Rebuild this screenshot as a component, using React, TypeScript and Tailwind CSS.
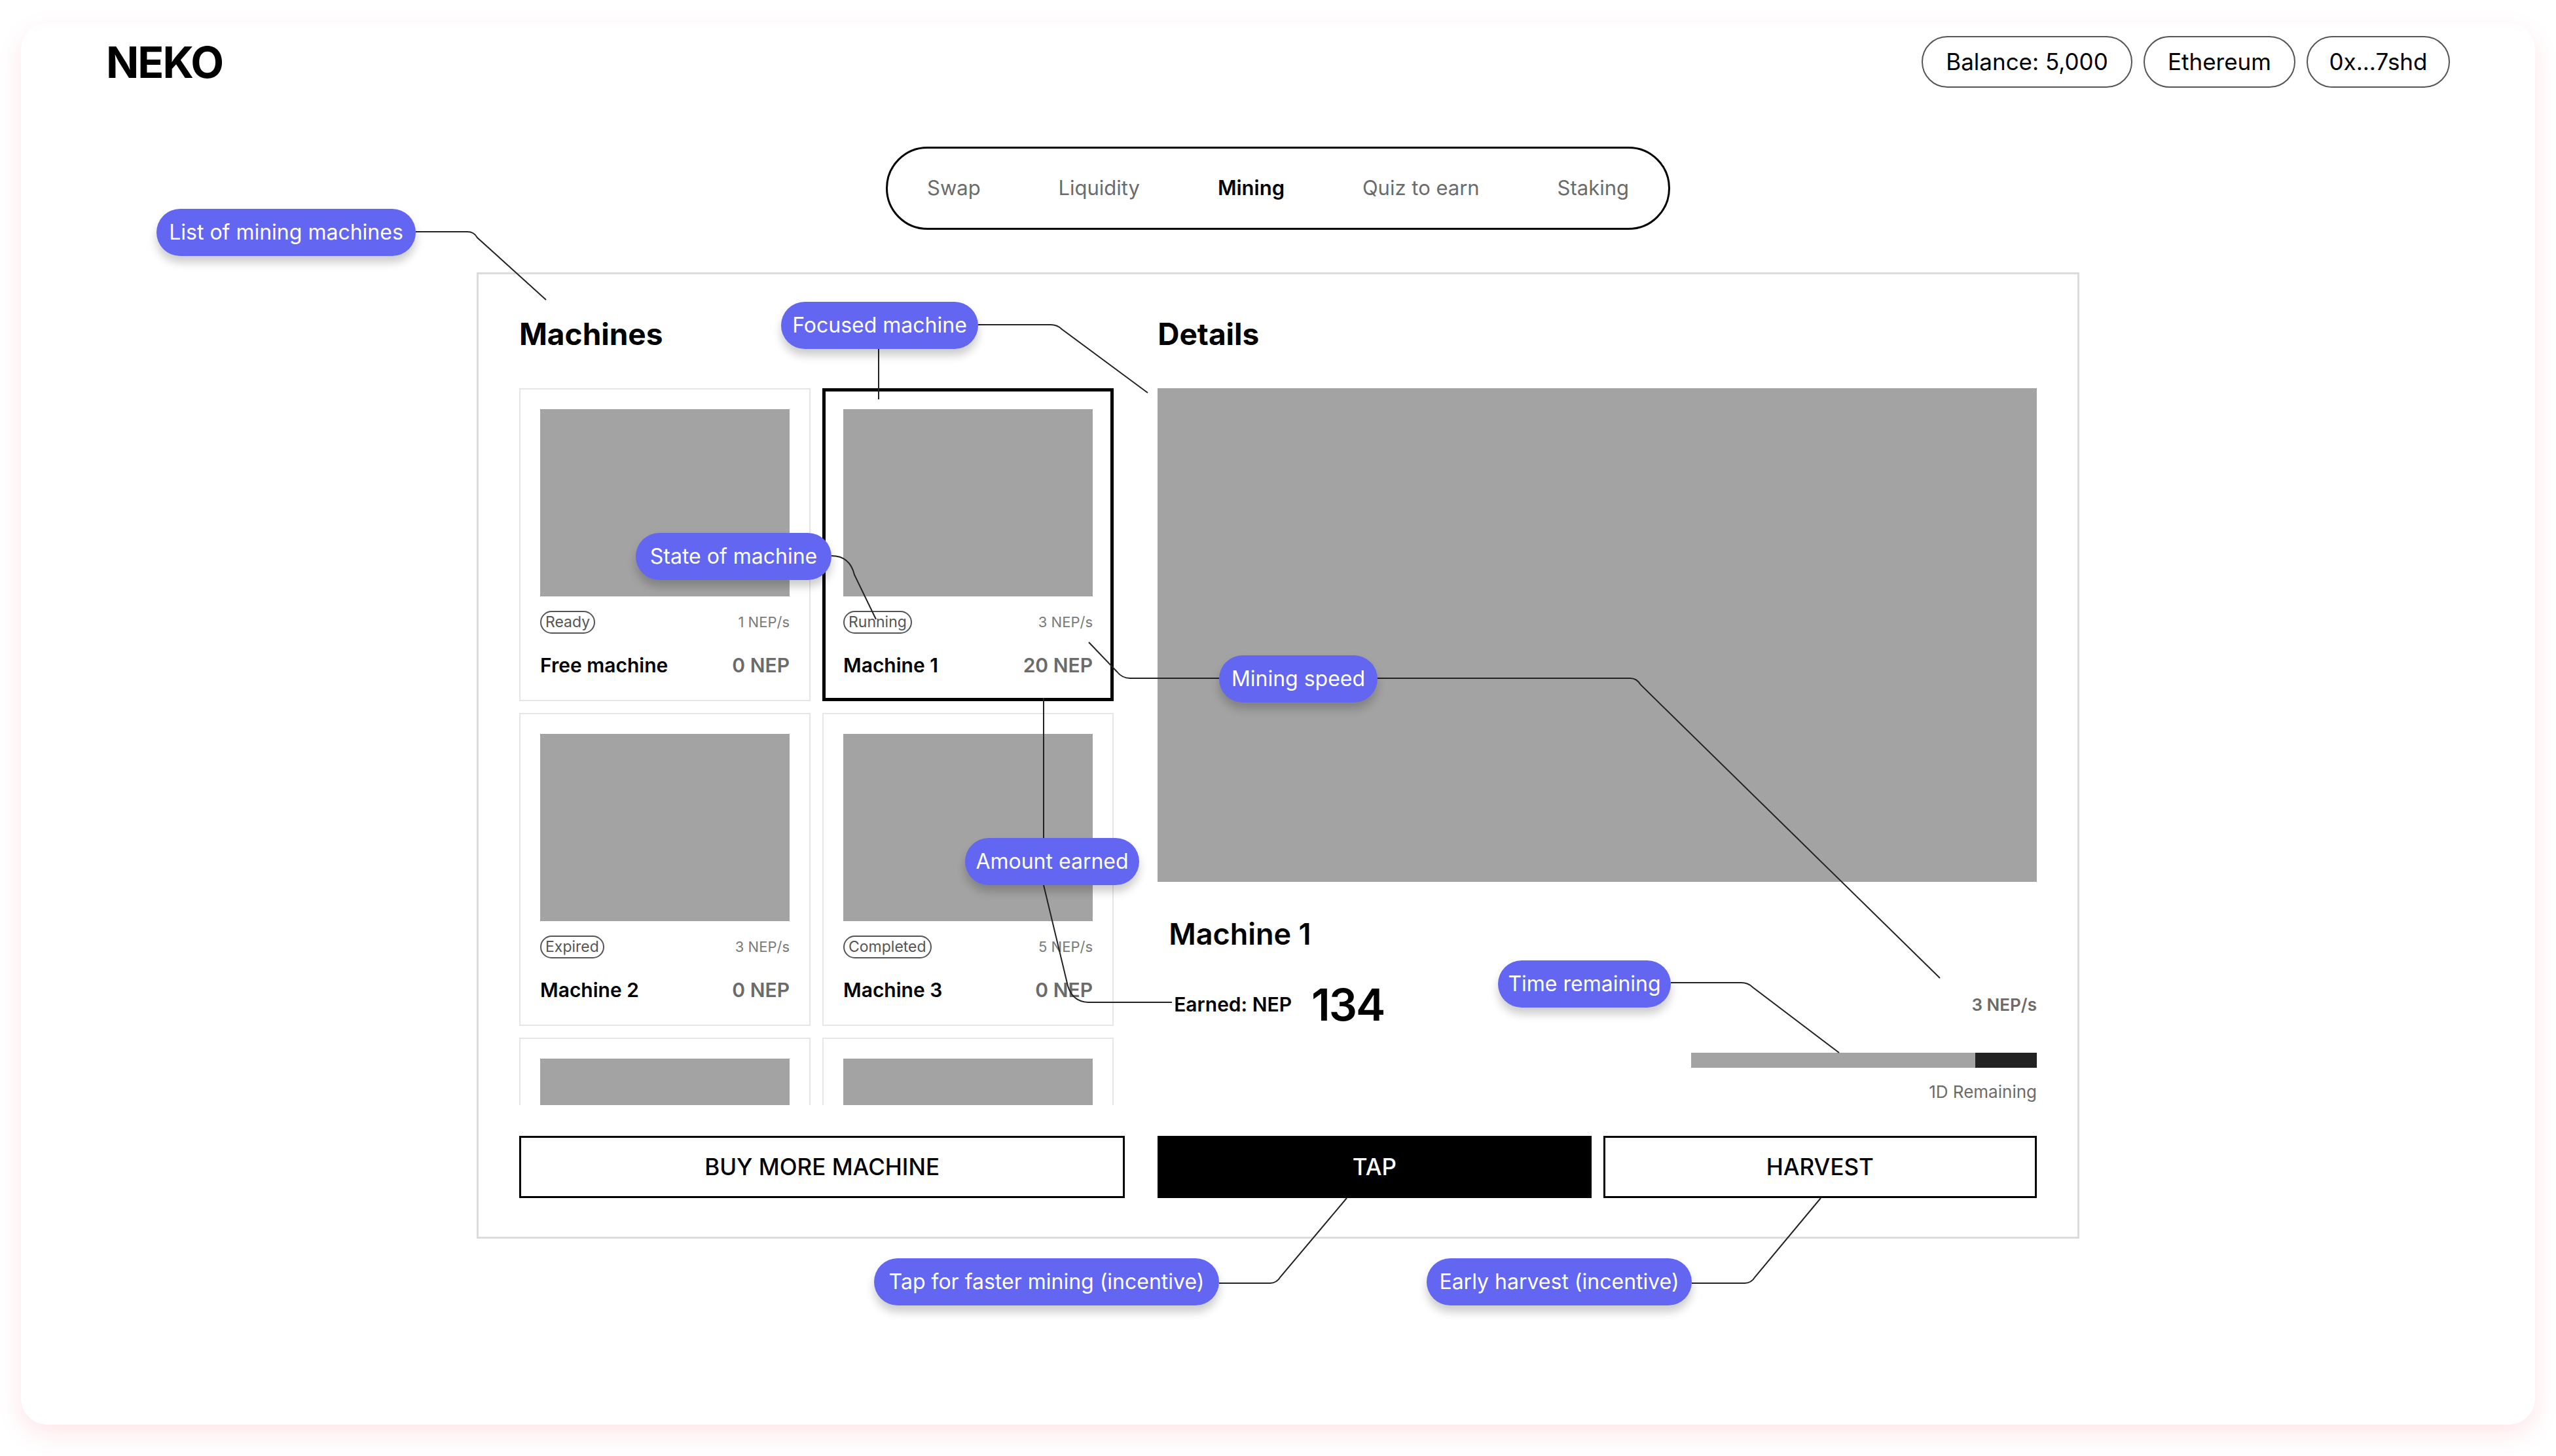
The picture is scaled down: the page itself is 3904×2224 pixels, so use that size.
import React from 'react';

type Machine = {
  name: string;
  state: string;
  rate: string;
  earned: string;
  focused?: boolean;
};

const machines: Machine[] = [
  { name: 'Free machine', state: 'Ready', rate: '1 NEP/s', earned: '0 NEP' },
  { name: 'Machine 1', state: 'Running', rate: '3 NEP/s', earned: '20 NEP', focused: true },
  { name: 'Machine 2', state: 'Expired', rate: '3 NEP/s', earned: '0 NEP' },
  { name: 'Machine 3', state: 'Completed', rate: '5 NEP/s', earned: '0 NEP' },
];

const navItems = ['Swap', 'Liquidity', 'Mining', 'Quiz to earn', 'Staking'];

function MachineCard({ m }: { m: Machine }) {
  return (
    <div
      className={`flex h-[478px] flex-col bg-white ${
        m.focused ? 'border-[5px] border-black px-[27px] pt-[27px]' : 'border-[2px] border-[#e6e6e6] px-[30px] pt-[30px]'
      }`}
    >
      <div className="h-[286px] w-full bg-[#a3a3a3]" />
      <div className="mt-[22px] flex h-[35px] items-center justify-between">
        <span className="rounded-full border-[2px] border-[#555] px-[6px] text-[23px] leading-[31px] text-[#555]">
          {m.state}
        </span>
        <span className="text-[22px] text-[#7a7a7a]">{m.rate}</span>
      </div>
      <div className="mt-[32px] flex items-center justify-between text-[30px] font-semibold leading-[32px]">
        <span className="text-black">{m.name}</span>
        <span className="text-[#6b6b6b]">{m.earned}</span>
      </div>
    </div>
  );
}

// cards further down the list, only their tops show above the fold
function EmptyCard() {
  return (
    <div className="h-[478px] border-[2px] border-[#e6e6e6] bg-white px-[30px] pt-[30px]">
      <div className="h-[286px] w-full bg-[#a3a3a3]" />
    </div>
  );
}

function Note({ text, className }: { text: string; className: string }) {
  return (
    <div
      className={`absolute h-[72px] whitespace-nowrap rounded-full bg-[#6366f1] text-center text-[32px] leading-[72px] text-white shadow-[0_10px_14px_rgba(0,0,0,0.2)] ${className}`}
    >
      {text}
    </div>
  );
}

function Connectors() {
  return (
    <svg className="pointer-events-none absolute left-0 top-0" width="3904" height="2224" fill="none">
      <g stroke="#222" strokeWidth="2">
        <path d="M635 354 H714 Q724 354 729 363 L834 458" />
        <path d="M1494 496 H1605 Q1615 496 1622 503 L1753 600" />
        <path d="M1342 533 V610" />
        <path d="M1270 849 Q1298 849 1305 878 L1338 946" />
        <path d="M1663 981 L1706 1026 Q1714 1036 1726 1036 H1862" />
        <path d="M2104 1036 H2490 Q2500 1036 2506 1046 L2963 1494" />
        <path d="M1594 1280 V1066" />
        <path d="M1594 1352 L1631 1506 Q1638 1530 1662 1531 H1790" />
        <path d="M2552 1501 H2660 Q2670 1501 2677 1508 L2809 1608" />
        <path d="M1862 1960 H1940 Q1950 1960 1956 1950 L2057 1830" />
        <path d="M2584 1960 H2665 Q2675 1960 2681 1950 L2781 1830" />
      </g>
    </svg>
  );
}

export default function App() {
  return (
    <div className="relative h-[2224px] w-[3904px] bg-white pt-[35px] font-['Inter',sans-serif] text-black">
      <div className="mx-[32px] flex h-[2141px] flex-col rounded-[40px] bg-white shadow-[0_14px_36px_rgba(244,63,94,0.13)]">
        {/* top bar */}
        <header className="flex items-center justify-between px-[130px] pt-[20px]">
          <div className="text-[66px] font-bold leading-none tracking-[-2px]">NEKO</div>
          <div className="flex gap-[17px] text-[35px]">
            <div className="flex h-[79px] w-[322px] items-center justify-center rounded-full border-[2px] border-[#555]">
              Balance: 5,000
            </div>
            <div className="flex h-[79px] w-[232px] items-center justify-center rounded-full border-[2px] border-[#555]">
              Ethereum
            </div>
            <div className="flex h-[79px] w-[219px] items-center justify-center rounded-full border-[2px] border-[#555]">
              0x...7shd
            </div>
          </div>
        </header>

        <nav className="mx-auto mt-[90px] flex h-[127px] w-[1198px] items-center justify-between rounded-full border-[3px] border-black px-[60px] text-[31px]">
          {navItems.map((item) => (
            <span key={item} className={item === 'Mining' ? 'font-semibold text-black' : 'text-[#6b6b6b]'}>
              {item}
            </span>
          ))}
        </nav>

        <main className="mx-auto mt-[65px] flex h-[1476px] w-[2448px] gap-[50px] border-[3px] border-[#dcdcdc] px-[62px] pt-[67px]">
          {/* machines list */}
          <section className="flex w-[926px] flex-col">
            <h2 className="h-[48px] text-[46px] font-bold leading-[48px]">Machines</h2>
            <div className="mt-[59px] h-[1095px] overflow-hidden">
              <div className="grid w-[908px] grid-cols-2 gap-[18px]">
                {machines.map((m) => (
                  <MachineCard key={m.name} m={m} />
                ))}
                <EmptyCard />
                <EmptyCard />
              </div>
            </div>
            <button className="mt-[47px] h-[95px] w-full border-[3px] border-black text-[35px] font-medium">
              BUY MORE MACHINE
            </button>
          </section>

          {/* details */}
          <section className="flex w-[1344px] flex-col">
            <h2 className="h-[48px] text-[46px] font-bold leading-[48px]">Details</h2>
            <div className="mt-[59px] h-[754px] w-full bg-[#a3a3a3]" />
            <div className="flex h-[341px] flex-col">
              <div className="mt-[56px] pl-[17px] text-[45px] font-semibold leading-[48px]">Machine 1</div>
              <div className="mt-[49px] flex h-[68px] items-center justify-between pl-[25px]">
                <div className="flex items-center gap-[30px]">
                  <span className="text-[30px] font-semibold">Earned: NEP</span>
                  <span className="text-[68px] font-semibold leading-none tracking-[-2px]">134</span>
                </div>
                <span className="text-[26px] font-semibold text-[#6b6b6b]">3 NEP/s</span>
              </div>
              <div className="ml-auto mt-[40px] flex h-[23px] w-[528px]">
                <div className="flex-1 bg-[#a3a3a3]" />
                <div className="w-[94px] bg-[#222]" />
              </div>
              <div className="mt-[24px] text-right text-[26px] leading-[26px] text-[#6b6b6b]">1D Remaining</div>
            </div>
            <div className="mt-[47px] grid h-[95px] grid-cols-2 gap-[18px]">
              <button className="bg-black text-[35px] font-medium text-white">TAP</button>
              <button className="border-[3px] border-black text-[35px] font-medium">HARVEST</button>
            </div>
          </section>
        </main>
      </div>

      <Connectors />
      <Note text="List of mining machines" className="left-[239px] top-[319px] w-[396px]" />
      <Note text="Focused machine" className="left-[1193px] top-[461px] w-[301px]" />
      <Note text="State of machine" className="left-[971px] top-[814px] w-[299px]" />
      <Note text="Mining speed" className="left-[1862px] top-[1001px] w-[242px]" />
      <Note text="Amount earned" className="left-[1474px] top-[1280px] w-[266px]" />
      <Note text="Time remaining" className="left-[2288px] top-[1467px] w-[264px]" />
      <Note text="Tap for faster mining (incentive)" className="left-[1335px] top-[1922px] w-[527px]" />
      <Note text="Early harvest (incentive)" className="left-[2179px] top-[1922px] w-[405px]" />
    </div>
  );
}
